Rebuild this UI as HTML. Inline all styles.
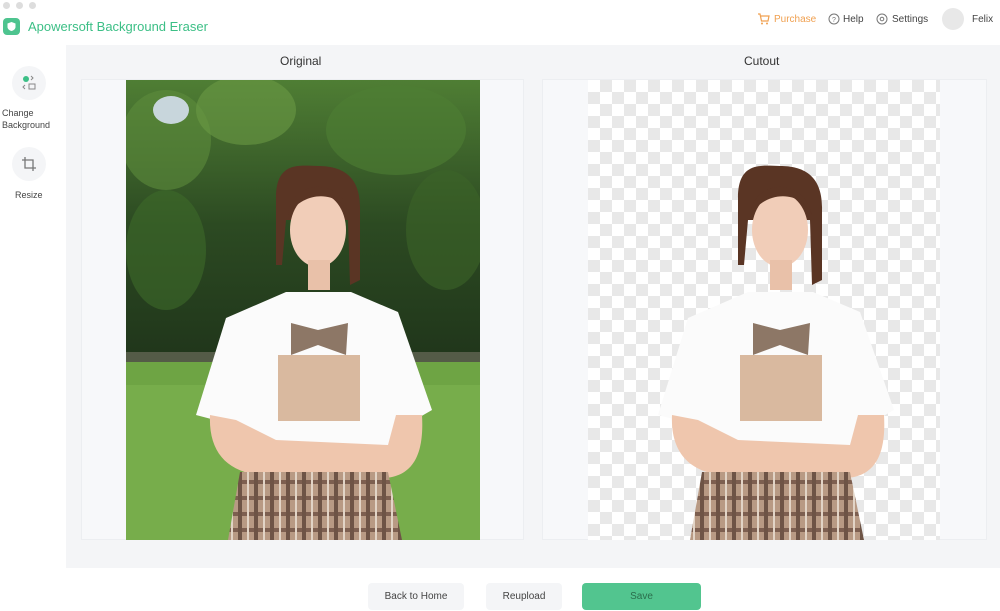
<!DOCTYPE html>
<html><head><meta charset="utf-8"><style>
body{margin:0;width:1000px;height:610px;background:#fff;font-family:"Liberation Sans",sans-serif;position:relative;overflow:hidden}
.abs{position:absolute}
.main{left:66px;top:45px;width:934px;height:523px;background:#f4f5f7}
.panel{top:79px;height:461px;background:#f7f8fa;border:1px solid #eceef1;box-sizing:border-box}
.t{font-size:12px;color:#333}
.btn{top:583px;height:27px;border-radius:4px;font-size:10px;color:#444;text-align:center;line-height:28px}
.checker{background-color:#fff;background-image:linear-gradient(45deg,#e8e8e8 25%,transparent 25%,transparent 75%,#e8e8e8 75%),linear-gradient(45deg,#e8e8e8 25%,transparent 25%,transparent 75%,#e8e8e8 75%);background-size:24px 24px;background-position:0 0,12px 12px}
</style></head><body>
<div class="abs" style="left:3px;top:2px;width:7px;height:7px;border-radius:50%;background:#ddd"></div>
<div class="abs" style="left:16px;top:2px;width:7px;height:7px;border-radius:50%;background:#ddd"></div>
<div class="abs" style="left:29px;top:2px;width:7px;height:7px;border-radius:50%;background:#ddd"></div>
<div class="abs" style="left:3px;top:18px;width:17px;height:17px;border-radius:4px;background:#4ec48f"></div>
<svg class="abs" style="left:6px;top:21px" width="11" height="11" viewBox="0 0 11 11"><path d="M5.5 1 L9.5 2.5 V6 C9.5 8 7.5 9.5 5.5 10 C3.5 9.5 1.5 8 1.5 6 V2.5Z" fill="#fff"/></svg>
<div class="abs" style="left:28px;top:19px;font-size:13px;color:#3cbf86">Apowersoft Background Eraser</div>
<svg class="abs" style="left:757px;top:13px" width="13" height="12" viewBox="0 0 13 12"><path d="M1 1h2l1.5 7h6.5l1-5H4" fill="none" stroke="#f0a050" stroke-width="1.2"/><circle cx="5" cy="10.5" r="1" fill="#f0a050"/><circle cx="10" cy="10.5" r="1" fill="#f0a050"/></svg>
<div class="abs" style="left:774px;top:14px;font-size:10px;color:#f0a050">Purchase</div>
<svg class="abs" style="left:828px;top:13px" width="12" height="12"><circle cx="6" cy="6" r="5" fill="none" stroke="#777"/><text x="4" y="9" font-size="7" fill="#777" font-family="Liberation Sans">?</text></svg>
<div class="abs" style="left:843px;top:14px;font-size:10px;color:#444">Help</div>
<svg class="abs" style="left:876px;top:13px" width="12" height="12"><circle cx="6" cy="6" r="5" fill="none" stroke="#777"/><circle cx="6" cy="6" r="1.8" fill="none" stroke="#777"/></svg>
<div class="abs" style="left:892px;top:14px;font-size:10px;color:#444">Settings</div>
<div class="abs" style="left:942px;top:8px;width:22px;height:22px;border-radius:50%;background:#e8e8e8"></div>
<div class="abs" style="left:972px;top:14px;font-size:10px;color:#444">Felix</div>

<div class="abs" style="left:12px;top:66px;width:34px;height:34px;border-radius:50%;background:#f4f5f7"></div>
<svg class="abs" style="left:20px;top:73px" width="18" height="18"><circle cx="6" cy="6" r="3" fill="#3cbf86"/><path d="M11 3 L13 5 L11 7 M5 12 L3 14 L5 16 M9 11 h6 v5 h-6z" fill="none" stroke="#888" stroke-width="1"/></svg>
<div class="abs" style="left:2px;top:107px;font-size:9px;color:#444;line-height:12px">Change<br>Background</div>
<div class="abs" style="left:12px;top:147px;width:34px;height:34px;border-radius:50%;background:#f4f5f7"></div>
<svg class="abs" style="left:21px;top:156px" width="16" height="16"><path d="M4 1v11h11M1 4h11v11" fill="none" stroke="#777" stroke-width="1.3"/></svg>
<div class="abs" style="left:15px;top:190px;font-size:9px;color:#444">Resize</div>

<div class="abs main"></div>
<div class="abs t" style="left:280px;top:54px">Original</div>
<div class="abs t" style="left:744px;top:54px">Cutout</div>
<div class="abs panel" style="left:81px;width:443px"></div>
<div class="abs panel" style="left:542px;width:445px"></div>

<svg width="0" height="0" style="position:absolute"><defs>
<pattern id="plaid" width="16" height="16" patternUnits="userSpaceOnUse"><rect width="16" height="16" fill="#b89a84"/><rect width="16" height="4" fill="#7d5f50"/><rect width="4" height="16" fill="#6e5446"/><rect x="9" width="2" height="16" fill="#e2d4c6"/></pattern>
<g id="girl">
<path d="M150 118 C150 80 175 86 192 86 C215 86 235 95 234 130 L234 200 L224 205 L222 140 L160 140 L156 185 L150 185Z" fill="#5a3524"/>
<ellipse cx="192" cy="150" rx="28" ry="37" fill="#f1cdb8"/>
<path d="M162 135 C165 100 215 95 224 135 C215 112 180 108 162 135Z" fill="#5a3524"/>
<rect x="182" y="180" width="22" height="30" fill="#e9c1a9"/>
<path d="M160 212 L225 212 L272 232 L306 330 L280 345 L272 390 L115 390 L108 345 L70 335 L100 238Z" fill="#fbfbfb"/>
<path d="M165 243 L192 250 L222 243 L220 275 L192 265 L165 275Z" fill="#8d7766"/>
<rect x="152" y="275" width="82" height="66" fill="#d9b99f"/>
<path d="M84 335 C82 380 110 400 160 395 L260 398 C290 395 298 370 296 335 L270 335 L262 365 L150 360 L110 340Z" fill="#efc6ad"/>
<path d="M114 392 L262 392 L276 460 L102 460Z" fill="url(#plaid)"/>
</g></defs></svg>

<svg class="abs" style="left:126px;top:80px" width="354" height="460">
<defs><linearGradient id="tr" x1="0" y1="0" x2="0" y2="1"><stop offset="0" stop-color="#4f7e34"/><stop offset=".5" stop-color="#2c4a22"/><stop offset="1" stop-color="#1f341a"/></linearGradient></defs>
<rect width="354" height="290" fill="url(#tr)"/>
<ellipse cx="40" cy="60" rx="45" ry="50" fill="#5d8c3c" opacity=".6"/>
<ellipse cx="120" cy="30" rx="50" ry="35" fill="#6a9a45" opacity=".6"/>
<ellipse cx="270" cy="50" rx="70" ry="45" fill="#4f7f34" opacity=".6"/>
<ellipse cx="320" cy="150" rx="40" ry="60" fill="#3c6428" opacity=".6"/>
<ellipse cx="40" cy="170" rx="40" ry="60" fill="#3e6a2a" opacity=".6"/>
<ellipse cx="45" cy="30" rx="18" ry="14" fill="#c8d6dc"/>
<rect y="272" width="354" height="10" fill="#545b47"/>
<rect y="282" width="354" height="178" fill="#6ea444"/>
<rect y="305" width="354" height="155" fill="#77ad4b"/>
<use href="#girl"/>
</svg>

<div class="abs checker" style="left:588px;top:80px;width:352px;height:460px"></div>
<svg class="abs" style="left:588px;top:80px" width="354" height="460"><use href="#girl"/></svg>

<div class="abs btn" style="left:368px;width:96px;background:#f4f5f7">Back to Home</div>
<div class="abs btn" style="left:486px;width:76px;background:#f4f5f7">Reupload</div>
<div class="abs btn" style="left:582px;width:119px;background:#52c58f;color:#2b6e4c">Save</div>
</body></html>
